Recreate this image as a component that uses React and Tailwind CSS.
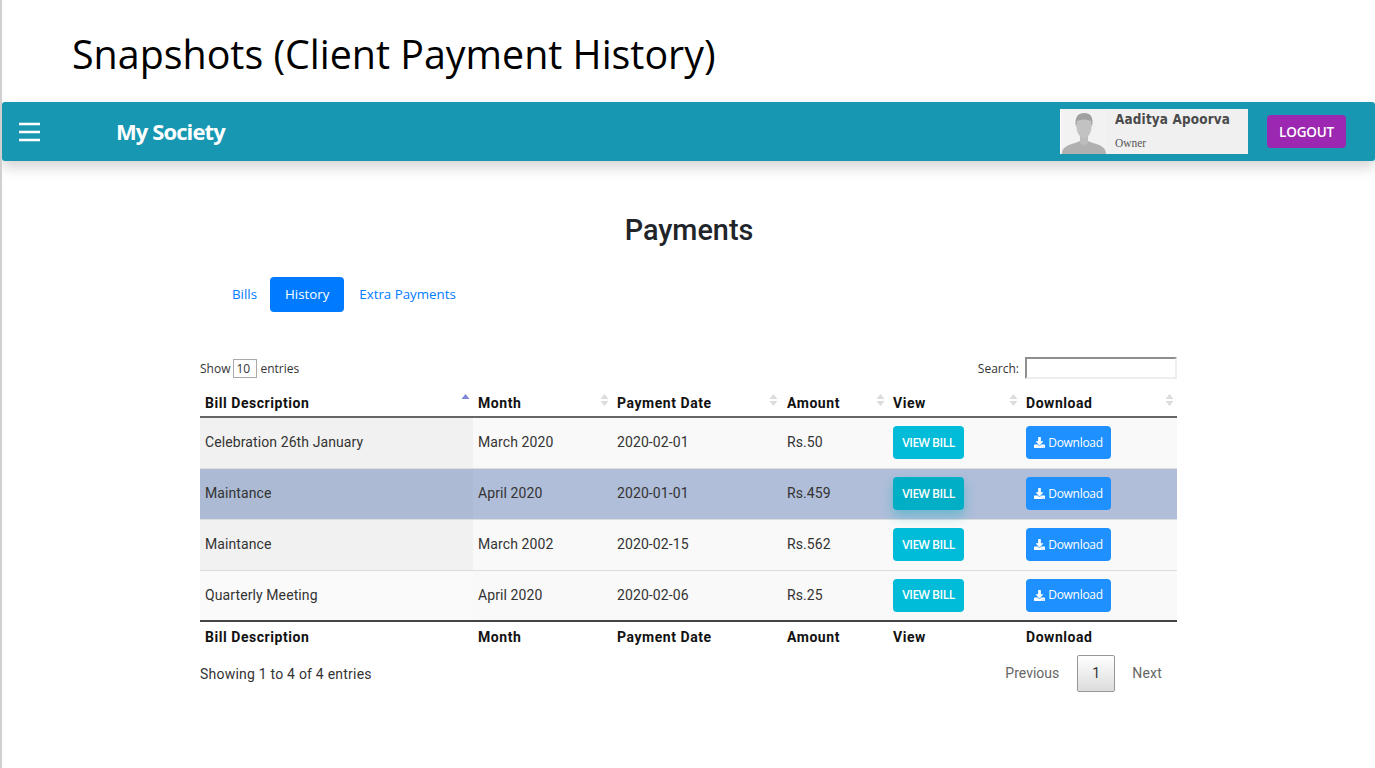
import { FaDownload } from "react-icons/fa";

const rows = [
  { desc: "Celebration 26th January", month: "March 2020", date: "2020-02-01", amount: "Rs.50" },
  { desc: "Maintance", month: "April 2020", date: "2020-01-01", amount: "Rs.459", hover: true },
  { desc: "Maintance", month: "March 2002", date: "2020-02-15", amount: "Rs.562" },
  { desc: "Quarterly Meeting", month: "April 2020", date: "2020-02-06", amount: "Rs.25", odd: true },
];

const columns = ["Bill Description", "Month", "Payment Date", "Amount", "View", "Download"];

function SortIcon({ active }) {
  return (
    <svg width="9" height="14" viewBox="0 0 9 14" className="absolute right-[3px] top-[4px]">
      <path d="M4.5 1 L8.5 6 L0.5 6 Z" fill={active ? "#7f86d8" : "#dcdcdc"} />
      {!active && <path d="M4.5 13 L8.5 8 L0.5 8 Z" fill="#dcdcdc" />}
    </svg>
  );
}

function Avatar() {
  return (
    <svg width="46" height="45" viewBox="0 0 46 45" className="bg-[#f2f2f2] shrink-0">
      <path d="M1 45 C1 38 7 36 14 34 L19 32 L27 32 L32 34 C39 36 45 38 45 45 Z" fill="#b0b0b0" />
      <path d="M19 26 L27 26 L27 34 L23 37 L19 34 Z" fill="#bcbcbc" />
      <ellipse cx="23" cy="18" rx="7.5" ry="11" fill="#c2c2c2" />
      <path d="M15 18 C13 7 18 4 23 4 C29 4 33 7 31 18 L29.5 12 C26 10 20 10 16.5 12 Z" fill="#a0a0a0" />
    </svg>
  );
}

export default function App() {
  return (
    <div className="w-[1375px] h-[768px] overflow-hidden bg-white border-l-2 border-[#d0d0d0] font-['Roboto',sans-serif]">
      {/* Slide title */}
      <h1 className="h-[102px] pl-[70px] pt-[25px] text-[39.4px] leading-[58px] text-black font-['Open_Sans',sans-serif]">
        Snapshots (Client Payment History)
      </h1>

      {/* Navbar */}
      <nav className="h-[59px] flex items-center rounded-[3px] bg-[#1797b2] shadow-[0_6px_14px_rgba(0,0,0,0.18)]">
        <svg width="22" height="20" viewBox="0 0 22 20" className="ml-[17px]">
          <path d="M0 2 H21 M0 10 H21 M0 18 H21" stroke="#fff" strokeWidth="2.4" />
        </svg>
        <span className="ml-[75px] text-[22px] font-bold tracking-[-0.9px] text-white font-['Open_Sans',sans-serif]">
          My Society
        </span>
        <div className="ml-auto flex h-[45px] w-[188px] items-stretch bg-[#f0f0f0] border-l border-white">
          <Avatar />
          <div className="pl-[8px]">
            <div className="text-[14px] leading-[20px] font-bold tracking-[0.2px] text-[#4a4a4a] font-['DejaVu_Sans',sans-serif] scale-x-[0.86] origin-left whitespace-nowrap">
              Aaditya Apoorva
            </div>
            <div className="pt-[7px] text-[12px] leading-[14px] text-[#555] font-['Liberation_Serif',serif] scale-x-[0.95] origin-left">Owner</div>
          </div>
        </div>
        <button className="ml-[19px] mr-[29px] h-[33px] w-[79px] rounded-[4px] bg-[#9c27b0] pt-[1px] text-[13.5px] font-semibold tracking-[-0.2px] text-white font-['Open_Sans',sans-serif]">
          LOGOUT
        </button>
      </nav>

      {/* Content */}
      <main className="w-[977px] ml-[198px]">
        <h2 className="pt-[52px] text-center text-[28.8px] leading-[34px] font-medium text-[#212529] pl-[1px]">Payments</h2>

        <div className="mt-[30px] flex h-[35px] items-center pl-[18px] text-[13.3px] text-[#007bff] font-['Open_Sans',sans-serif]">
          <a className="pl-[14px] pr-[13px] leading-[35px]">Bills</a>
          <a className="px-[15px] leading-[35px] rounded-[4px] bg-[#007bff] text-white">History</a>
          <a className="px-[15px] leading-[35px]">Extra Payments</a>
        </div>

        <div className="mt-[45px] flex h-[23px] items-center justify-between text-[12px] text-[#333] font-['Open_Sans',sans-serif]">
          <label className="flex items-center">
            Show
            <span className="mx-[3px] h-[19px] w-[24px] border border-[#a9a9a9] pl-[2px] text-[12px] leading-[17px]">10</span>
            entries
          </label>
          <label className="flex items-center">
            Search:
            <span className="ml-[6px] mb-[2px] h-[22px] w-[152px] border-2 border-t-[#8f8f8f] border-l-[#8f8f8f] border-r-[#eeeeee] border-b-[#eeeeee]"></span>
          </label>
        </div>

        <table className="mt-[9px] w-full table-fixed border-collapse text-[14px] text-[#333]">
          <colgroup>
            <col className="w-[273px]" />
            <col className="w-[139px]" />
            <col className="w-[169px]" />
            <col className="w-[107px]" />
            <col className="w-[133px]" />
            <col className="w-[156px]" />
          </colgroup>
          <thead>
            <tr className="h-[28px] border-b-2 border-[#666]">
              {columns.map((c, i) => (
                <th key={c} className={`relative pt-[2px] text-left font-bold text-[#111] tracking-[0.55px] ${i === 3 ? "pl-[6px] pr-[4px]" : "px-[5px]"}`}>
                  {c}
                  <SortIcon active={i === 0} />
                </th>
              ))}
            </tr>
          </thead>
          <tbody>
            {rows.map((r, i) => (
              <tr
                key={i}
                className={`h-[51px] border-b border-[#ddd] ${r.hover ? "bg-[#b0bed9]" : "bg-[#f9f9f9]"}`}
              >
                <td className={`px-[5px] tracking-[0.1px] ${r.hover ? "bg-[#acbad4]" : r.odd ? "bg-[#fafafa]" : "bg-[#f1f1f1]"}`}>{r.desc}</td>
                <td className="px-[5px] tracking-[0.1px]">{r.month}</td>
                <td className="px-[5px] tracking-[0.1px]">{r.date}</td>
                <td className="pl-[6px] pr-[4px] tracking-[0.1px]">{r.amount}</td>
                <td className="px-[5px]">
                  <button className={`h-[33px] w-[71px] rounded-[4px] text-[12px] font-semibold text-white font-['Open_Sans',sans-serif] tracking-[-0.5px] ${r.hover ? "bg-[#00aec5] shadow-[0_6px_12px_rgba(0,172,193,0.4)]" : "bg-[#00bcd9]"}`}>
                    VIEW BILL
                  </button>
                </td>
                <td className="px-[5px]">
                  <button className="flex h-[33px] w-[85px] items-center justify-center gap-[3px] rounded-[4px] bg-[#1e90ff] text-[12px] text-white font-['Open_Sans',sans-serif] tracking-[-0.3px]">
                    <FaDownload className="text-[11px]" />
                    Download
                  </button>
                </td>
              </tr>
            ))}
          </tbody>
          <tfoot>
            <tr className="h-[29px] border-t-2 border-[#444]">
              {columns.map((c, i) => (
                <th key={c} className={`pt-[2px] text-left font-bold text-[#111] tracking-[0.55px] ${i === 3 ? "pl-[6px] pr-[4px]" : "px-[5px]"}`}>{c}</th>
              ))}
            </tr>
          </tfoot>
        </table>

        <div className="mt-[5px] flex items-start justify-between text-[14px] text-[#333]">
          <div className="pt-[9px] tracking-[0.22px]">Showing 1 to 4 of 4 entries</div>
          <div className="flex items-center text-[#666]">
            <span className="px-[18px]">Previous</span>
            <span className="flex h-[37px] w-[38px] items-center justify-center rounded-[2px] border border-[#979797] bg-gradient-to-b from-white to-[#dcdcdc] text-[#333]">1</span>
            <span className="pl-[17px] pr-[15px] tracking-[0.2px]">Next</span>
          </div>
        </div>
      </main>
    </div>
  );
}
